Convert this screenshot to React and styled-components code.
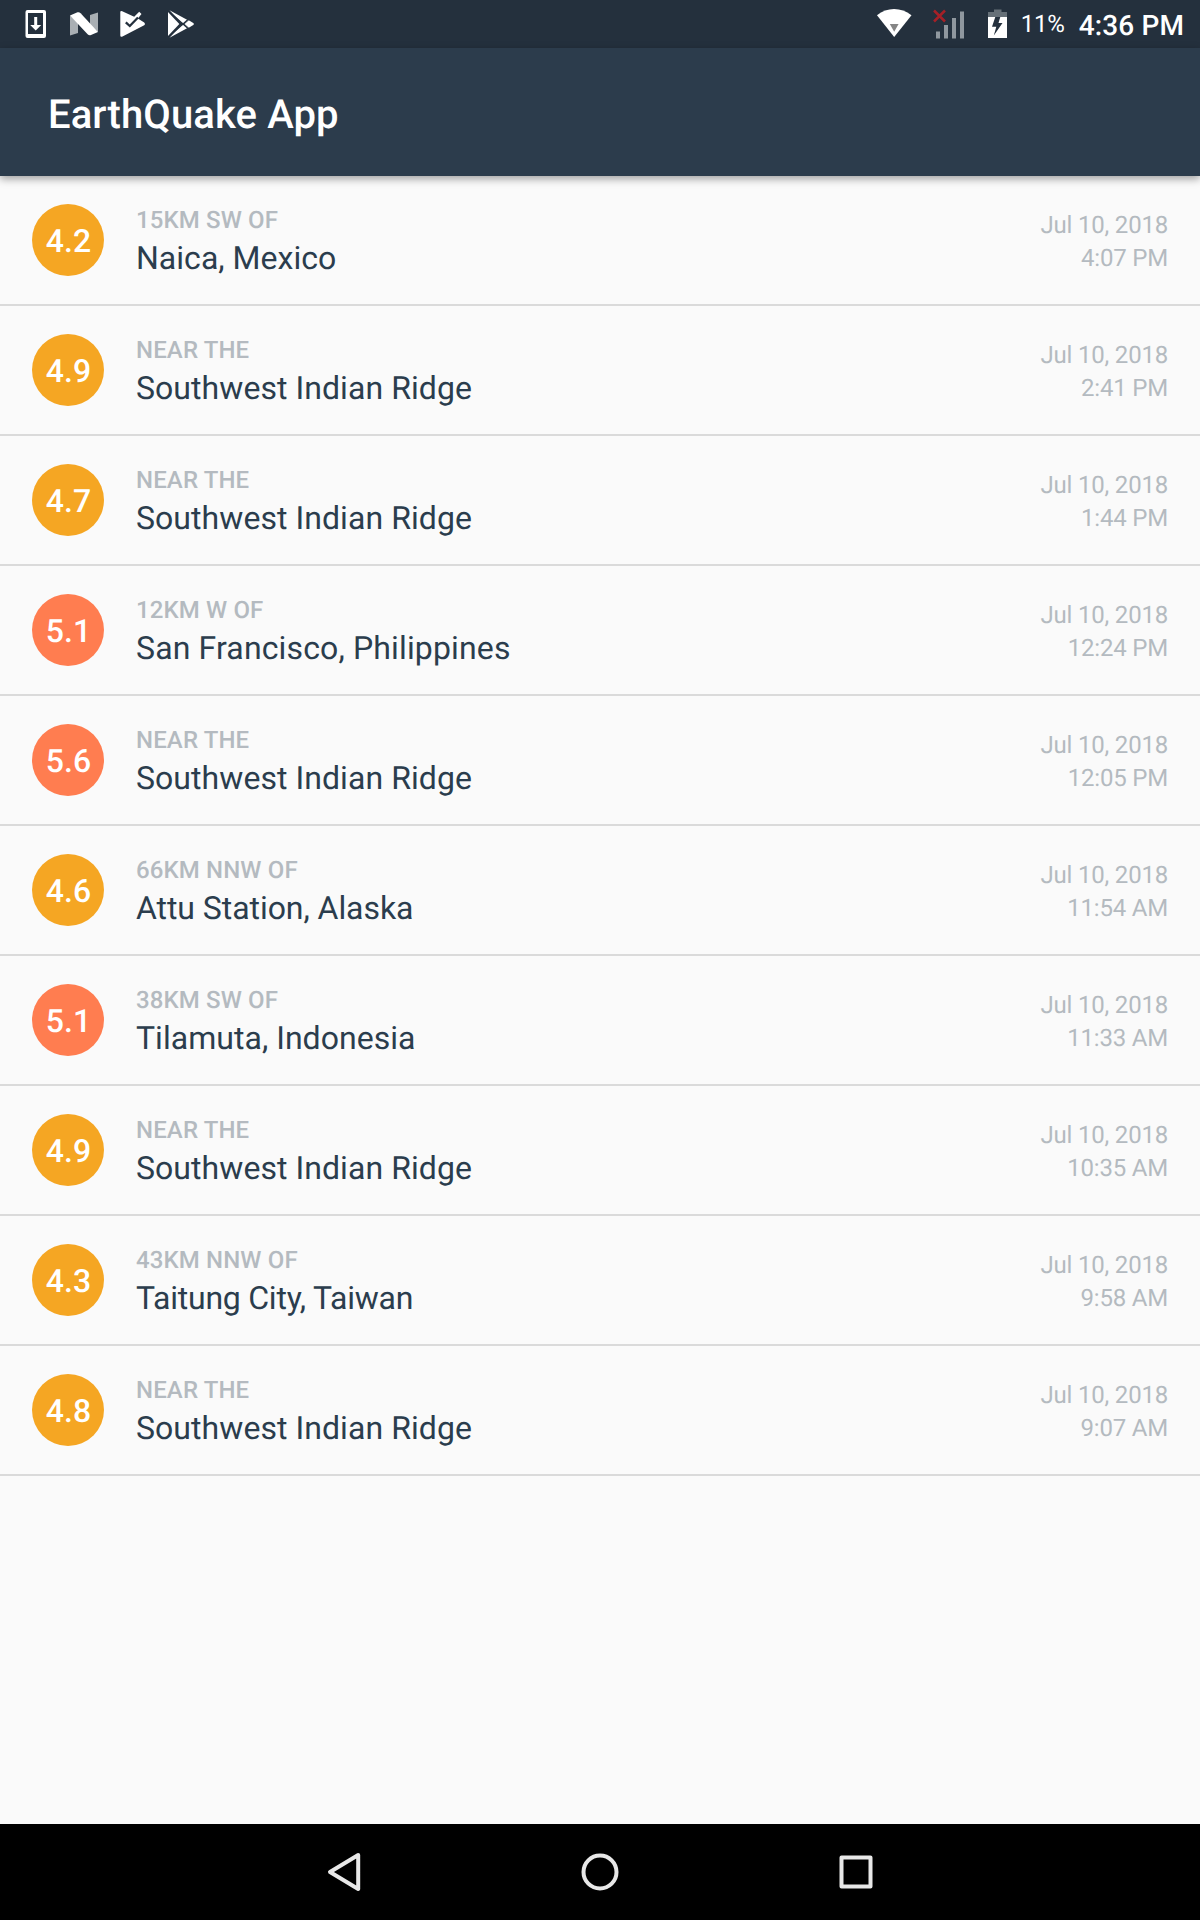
import React from "react";
import styled, { createGlobalStyle } from "styled-components";

const GlobalStyle = createGlobalStyle`
  * { box-sizing: border-box; }
  body {
    margin: 0;
    background: #fafafa;
    font-family: Roboto, "Liberation Sans", sans-serif;
    font-kerning: normal;
    text-rendering: geometricPrecision;
  }
`;

const Screen = styled.div`
  display: flex;
  flex-direction: column;
  width: 1200px;
  height: 1920px;
  background: #fafafa;
  overflow: hidden;
`;

const StatusBar = styled.header`
  display: flex;
  flex: none;
  justify-content: space-between;
  height: 48px;
  background: #24303d;
  color: #fff;
`;

const Notifications = styled.div`
  display: flex;
  padding-left: 11px;
`;

const NotificationIcon = styled.svg`
  display: block;
  width: 48px;
  height: 48px;
`;

const SystemStatus = styled.div`
  display: flex;
  padding-right: 16px;
`;

const StatusIcon = styled.svg`
  display: block;
  width: ${(p) => p.$width}px;
  height: 48px;
`;

const BatteryLevel = styled.span`
  width: 58px;
  font-size: 24px;
  line-height: 49px;
  letter-spacing: -0.3px;
  white-space: nowrap;
`;

const Clock = styled.time`
  font-size: 28px;
  font-weight: 500;
  line-height: 51px;
  letter-spacing: 0.1px;
  white-space: nowrap;
`;

const AppBar = styled.div`
  position: relative;
  display: flex;
  flex: none;
  align-items: center;
  height: 128px;
  padding-left: 48px;
  background: #2c3c4c;
  box-shadow: 0 3px 8px rgba(0, 0, 0, 0.36);
`;

const Title = styled.h1`
  margin: 6px 0 0;
  color: #fff;
  font-size: 40px;
  font-weight: 500;
  line-height: 48px;
  letter-spacing: 0.1px;
`;

const QuakeList = styled.ul`
  flex: 1;
  margin: 0;
  padding: 0;
  list-style: none;
`;

const QuakeRow = styled.li`
  display: flex;
  align-items: center;
  height: 130px;
  padding: 0 32px;
  border-bottom: 2px solid #dadada;
`;

const Magnitude = styled.div`
  flex: none;
  width: 72px;
  height: 72px;
  padding-left: 1px;
  border-radius: 50%;
  background: ${(p) => (p.$strong ? "#ff7d50" : "#f5a623")};
  color: #fff;
  font-size: 32px;
  font-weight: 500;
  line-height: 74px;
  text-align: center;
`;

const Location = styled.div`
  flex: 1;
  margin: 2px 0 0 32px;
`;

const Offset = styled.div`
  color: #b4bac0;
  font-size: 24px;
  font-weight: 500;
  line-height: 32px;
  letter-spacing: 0.13px;
`;

const Place = styled.div`
  margin-top: 1px;
  color: #2b3d4d;
  font-size: 32px;
  line-height: 42px;
  letter-spacing: ${(p) => p.$tracking}px;
`;

const When = styled.div`
  padding-top: 3px;
  color: #b4bac0;
  font-size: 24px;
  line-height: 33px;
  letter-spacing: -0.2px;
  text-align: right;
`;

const NavBar = styled.nav`
  display: flex;
  flex: none;
  align-items: center;
  justify-content: center;
  gap: 208px;
  height: 96px;
  background: #000;
`;

const NavIcon = styled.svg`
  display: block;
  width: 48px;
  height: 48px;
  fill: none;
  stroke: #e8e8e8;
  stroke-width: 4;
  stroke-linejoin: round;
`;

const quakes = [
  ["4.2", "15KM SW OF", "Naica, Mexico", "4:07 PM", 0.03],
  ["4.9", "NEAR THE", "Southwest Indian Ridge", "2:41 PM", 0.06],
  ["4.7", "NEAR THE", "Southwest Indian Ridge", "1:44 PM", 0.06],
  ["5.1", "12KM W OF", "San Francisco, Philippines", "12:24 PM", 0.14],
  ["5.6", "NEAR THE", "Southwest Indian Ridge", "12:05 PM", 0.06],
  ["4.6", "66KM NNW OF", "Attu Station, Alaska", "11:54 AM", -0.06],
  ["5.1", "38KM SW OF", "Tilamuta, Indonesia", "11:33 AM", 0.03],
  ["4.9", "NEAR THE", "Southwest Indian Ridge", "10:35 AM", 0.06],
  ["4.3", "43KM NNW OF", "Taitung City, Taiwan", "9:58 AM", -0.24],
  ["4.8", "NEAR THE", "Southwest Indian Ridge", "9:07 AM", 0.06],
];

function StatusIcons() {
  return (
    <StatusBar>
      <Notifications>
        <NotificationIcon viewBox="0 0 48 48">
          <path
            fill="#fff"
            fillRule="evenodd"
            d="M16.500 10h16.500a2 2 0 0 1 2 2v24a2 2 0 0 1-2 2h-16.500a2 2 0 0 1-2-2v-24a2 2 0 0 1 2-2zM17 13v21h15v-21z"
          />
          <path fill="#fff" d="M23.200 17h3v8h4l-5.500 5.500-5.500-5.500h4z" />
        </NotificationIcon>
        <NotificationIcon viewBox="0 0 48 48">
          <path fill="#a9afb4" d="M11 15.500L19 22V33L11 35.500zM39 12.500V32L31 25V15z" />
          <path fill="#fff" d="M11 15.500L18.500 12.300Q20.300 11.800 21.600 13.200L39 32L32 35Q30 35.700 28.600 34.300z" />
        </NotificationIcon>
        <NotificationIcon viewBox="0 0 48 48">
          <path
            fill="#fff"
            d="M13.300 12.300Q13.300 10.200 15.200 11.200L27.200 16.800L32.200 11.800L34.500 14L30.900 18.500L37.200 22.500Q39 24 37.200 25.300L15.500 36.500Q13.300 37.400 13.300 35.500z"
          />
          <path fill="none" stroke="#24303d" strokeWidth="2.300" d="M18.800 22.300L22.800 26L31 17.500" />
        </NotificationIcon>
        <NotificationIcon viewBox="0 0 48 48">
          <path fill="#fff" d="M13 12V36L24.300 24z" />
          <path fill="#fff" d="M14.500 10.300L33 20.300L29.300 23.200L26 22.400z" />
          <path fill="#fff" d="M14.500 37.700L33 27.700L29.300 24.800L26 25.600z" />
          <path fill="#fff" d="M33.800 20.300L38.700 23.200V24.800L33.800 27.700L29.500 24z" />
          <path stroke="#24303d" strokeWidth="1.200" d="M14 11.500L33 28.500M14 36.500L33 19.500" />
        </NotificationIcon>
      </Notifications>
      <SystemStatus>
        <StatusIcon $width={56} viewBox="0 0 56 48">
          <path fill="#fff" d="M5 15.200C15 6.900 29 6.900 39.500 15.200L22.200 37z" />
          <path fill="#858585" d="M17.800 24H26.600L22.200 31.800z" />
        </StatusIcon>
        <StatusIcon $width={57} viewBox="0 0 57 48">
          <path fill="#8f979e" d="M8 31.500h4v7h-4zM16 25h4v13.500h-4zM24 18h4v20.500h-4zM32 11.500h4v27h-4z" />
          <path stroke="#a52027" strokeWidth="2.500" d="M6 10.500L17 21.500M17 10.500L6 21.500" />
        </StatusIcon>
        <StatusIcon $width={36} viewBox="0 0 36 48">
          <path fill="#667078" d="M9 9.500h7.500v2.500h5.500v5h-19v-5h6z" />
          <path fill="#fff" d="M3 17h19v21h-19z" />
          <path fill="#24303d" d="M10.300 17H15.300L13.500 23H17.500L8.800 35.500L11.300 26.800H7z" />
        </StatusIcon>
        <BatteryLevel>11%</BatteryLevel>
        <Clock>4:36 PM</Clock>
      </SystemStatus>
    </StatusBar>
  );
}

export default function App() {
  return (
    <>
      <GlobalStyle />
      <Screen>
        <StatusIcons />
        <AppBar>
          <Title>EarthQuake App</Title>
        </AppBar>
        <QuakeList>
          {quakes.map(([magnitude, offset, place, time, tracking]) => (
            <QuakeRow key={time}>
              <Magnitude $strong={Number(magnitude) >= 5}>{magnitude}</Magnitude>
              <Location>
                <Offset>{offset}</Offset>
                <Place $tracking={tracking}>{place}</Place>
              </Location>
              <When>
                <div>Jul 10, 2018</div>
                <div>{time}</div>
              </When>
            </QuakeRow>
          ))}
        </QuakeList>
        <NavBar>
          <NavIcon viewBox="0 0 48 48">
            <path d="M38.200 7L10 24L38.200 41z" />
          </NavIcon>
          <NavIcon viewBox="0 0 48 48">
            <circle cx="24" cy="24" r="16.500" />
          </NavIcon>
          <NavIcon viewBox="0 0 48 48">
            <rect x="9.500" y="9.500" width="29" height="29" />
          </NavIcon>
        </NavBar>
      </Screen>
    </>
  );
}
